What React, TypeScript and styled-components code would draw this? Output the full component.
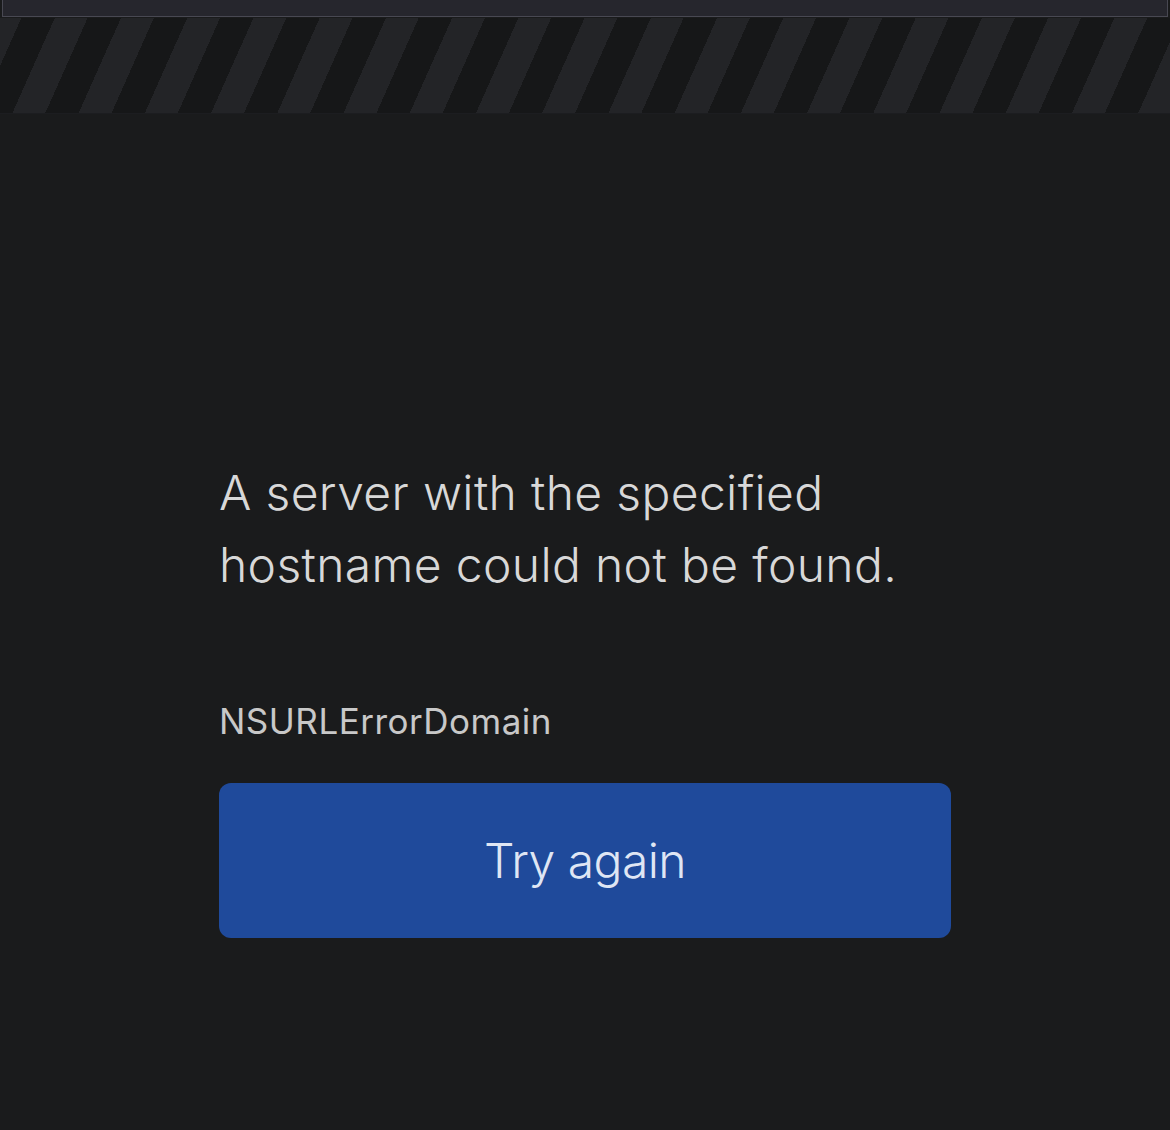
import React from "react";
import styled, { createGlobalStyle } from "styled-components";

const GlobalStyle = createGlobalStyle`
  html, body {
    margin: 0;
    padding: 0;
    background: #1a1b1c;
    overflow: hidden;
  }
  body {
    font-family: Inter, "Noto Sans", "Liberation Sans", sans-serif;
    -webkit-font-smoothing: antialiased;
  }
  * { box-sizing: border-box; }
`;

const Page = styled.div`
  width: 100%;
  height: 1130px;
  display: flex;
  flex-direction: column;
  background: #1a1b1c;
`;

const TopBar = styled.div`
  height: 17px;
  margin: 0 2px 1px;
  background: #26262d;
  border: 1px solid #484852;
  border-top: none;
`;

const Stripes = styled.div`
  height: 96px;
  background: repeating-linear-gradient(
    114deg,
    #232427 0px,
    #232427 19.5px,
    #161718 19.5px,
    #161718 50px,
    #232427 50px,
    #232427 60.5px
  );
  border-bottom: 1px solid #1c1d20;
`;

const Content = styled.main`
  width: 732px;
  margin: 0 auto;
  padding-top: 343px;
  display: flex;
  flex-direction: column;
  align-items: stretch;
`;

const Message = styled.p`
  margin: 0;
  font-size: 48px;
  line-height: 72px;
  font-weight: 300;
  color: #d8d8d8;
  letter-spacing: 0.35px;
`;

const Domain = styled.div`
  margin-top: 95px;
  font-size: 35px;
  line-height: 51px;
  font-weight: 400;
  color: #c8c8c8;
  letter-spacing: 0.5px;
`;

const RetryButton = styled.button`
  margin-top: 36px;
  height: 155px;
  width: 100%;
  border: none;
  border-radius: 12px;
  background: #1f4a9b;
  color: #dfe6f4;
  font-family: inherit;
  font-size: 48px;
  font-weight: 300;
  letter-spacing: -0.55px;
  cursor: pointer;
  display: flex;
  align-items: center;
  justify-content: center;
  padding: 0;
`;

export default function App() {
  return (
    <>
      <GlobalStyle />
      <Page>
        <TopBar />
        <Stripes />
        <Content>
          <Message>
            A server with the specified
            <br />
            hostname could not be found.
          </Message>
          <Domain>NSURLErrorDomain</Domain>
          <RetryButton type="button">Try again</RetryButton>
        </Content>
      </Page>
    </>
  );
}
